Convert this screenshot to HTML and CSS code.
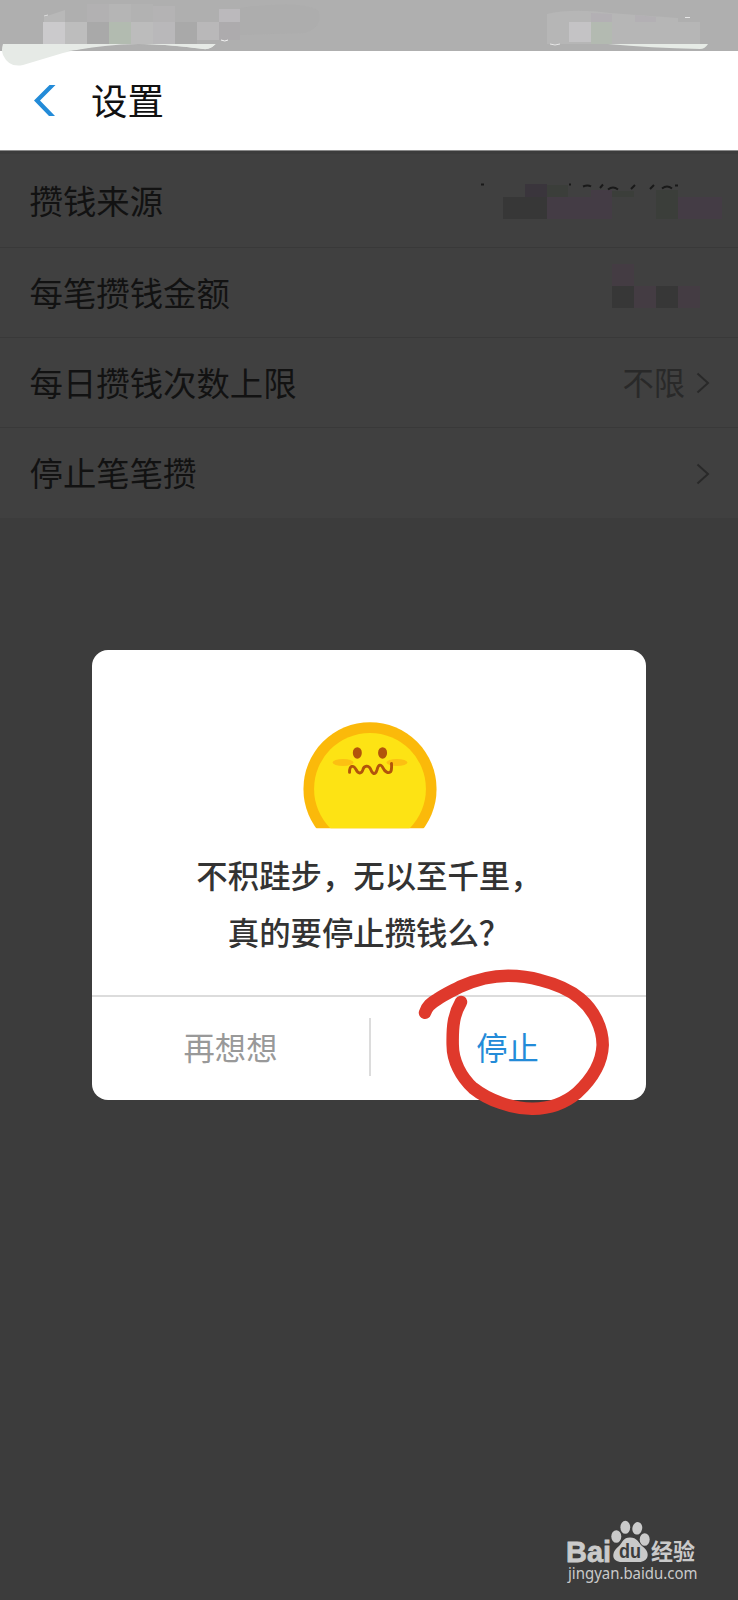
FILE: index.html
```html
<!DOCTYPE html>
<html lang="zh-CN">
<head>
<meta charset="utf-8">
<title>设置</title>
<link rel="stylesheet" href="styles.css">
</head>
<body>
<div class="screen">
  <div class="status">
    <svg class="smudge" width="738" height="70" viewBox="0 0 738 70">
      <path d="M3 44H216Q211 50 203 49Q145 41 105 46Q78 49 63 53L23 65Q9 68 3 55Q1 50 3 44Z" fill="#e6eae6"/>
      <path d="M80 50Q125 42 203 49Q211 50 216 44L214 51H68Z" fill="#afafaf"/>
      <path d="M110 44H215Q211 50 203 49Q160 43 110 44Z" fill="#e6eae6"/>
      <g shape-rendering="crispEdges">
        <path d="M43 22H65V44H43Z" fill="#cbcacc"/>
        <path d="M65 22H87V44H65Z" fill="#bdbdbd"/>
        <path d="M87 4H109V22H87Z" fill="#b2b1b2"/>
        <path d="M87 22H109V44H87Z" fill="#a9a9a9"/>
        <path d="M109 4H131V22H109Z" fill="#b5b5b5"/>
        <path d="M109 22H131V44H109Z" fill="#b2bbb0"/>
        <path d="M131 4H153V22H131Z" fill="#b2b2b2"/>
        <path d="M131 22H153V44H131Z" fill="#bcbcbc"/>
        <path d="M153 6H175V22H153Z" fill="#b4b3b4"/>
        <path d="M153 22H175V44H153Z" fill="#b9b8ba"/>
        <path d="M175 22H197V44H175Z" fill="#a9a9a9"/>
        <path d="M197 22H219V40H197Z" fill="#b9b8b9"/>
        <path d="M219 9H240V22H219Z" fill="#bbb9bc"/>
        <path d="M219 22H240V40H219Z" fill="#adabad"/>
      </g>
      <path d="M44 17L65 10V22H44Z" fill="#b8b8b8"/>
      <path d="M44 16L48 15" stroke="#ddd"/>
      <path d="M221 40Q225 42 228 40" stroke="#f3f3f3" fill="none"/>
      <path d="M240 8Q300 0 318 10Q324 27 305 33L240 35Z" fill="#adadad"/>
      <path d="M547 14Q572 8 610 13L678 18V22H700V44H547Z" fill="#b6b6b6"/>
      <path d="M569 22H591V42H569Z" fill="#c4c3c5"/>
      <path d="M591 22H612V44H591Z" fill="#b3bab1"/>
      <path d="M591 13L612 14V22H591ZM635 15L656 17V22H635Z" fill="#b3b0b4"/>
      <path d="M608 44H708Q705 49 700 49Q650 48 608 44Z" fill="#e6ebe6"/>
      <path d="M550 44Q555 46 560 44M685 17.500H690" stroke="#e6e6e6" fill="none"/>
    </svg>
  </div>
  <header class="header">
    <svg class="back" width="22" height="33" viewBox="0 0 22 33"><path d="M21.500 1H15.500L0 16.500L15 32H21L6 16.500Z" fill="#238bd8"/></svg>
    <h1 class="title">设置</h1>
  </header>
  <main class="list">
    <div class="row row-first"><span class="label">攒钱来源</span>
      <svg class="mask" width="260" height="44" viewBox="0 0 260 44">
        <path d="M55 18H99V40H55Z" fill="#373737"/>
        <path d="M77 5H99V18H77Z" fill="#3a353c"/>
        <path d="M99 6H120V18H99ZM164 12H186V18H164ZM208 11H230V40H208Z" fill="#3b3e3a"/>
        <path d="M99 18H164V40H99ZM143 11H164V18H143ZM230 18H274V40H230Z" fill="#443c45"/>
        <path d="M33 5.500h3M121 5.500h2M135 7.500q5-2 8 0M152 9l3-3.500M160 10.500q5-4 10 0M183 10l4-4M202 10l4-4M214 9.500q5-4 10 0M227 6.500h3" stroke="#191919" stroke-width="2" fill="none"/>
      </svg>
    </div>
    <div class="row"><span class="label">每笔攒钱金额</span>
      <svg class="mask mask-amount" width="88" height="44" viewBox="0 0 88 44">
        <path d="M0 0H22V22H0ZM22 22H44V44H22ZM66 22H88V44H66Z" fill="#443c43"/>
        <path d="M0 22H22V44H0ZM44 22H66V44H44Z" fill="#373737"/>
      </svg>
    </div>
    <div class="row"><span class="label">每日攒钱次数上限</span>
      <span class="value"><span class="label">不限</span><svg width="14" height="22" viewBox="0 0 14 22"><path d="M1.500 1.500L12 11L1.500 20.500" fill="none" stroke="#292929" stroke-width="2"/></svg></span>
    </div>
    <div class="row row-last"><span class="label">停止笔笔攒</span>
      <span class="value"><svg width="14" height="22" viewBox="0 0 14 22"><path d="M1.500 1.500L12 11L1.500 20.500" fill="none" stroke="#292929" stroke-width="2"/></svg></span>
    </div>
  </main>

  <section class="dialog">
    <svg class="coin" width="134" height="107" viewBox="0 0 134 107">
      <clipPath id="cut"><path d="M0 0H134V106.500H0Z"/></clipPath>
      <g clip-path="url(#cut)">
        <circle cx="67" cy="67" r="66.700" fill="#fbb90a"/>
        <circle cx="67" cy="67" r="56" fill="#fde314"/>
      </g>
      <ellipse cx="40" cy="40.500" rx="10.500" ry="3.500" fill="#fcc012"/>
      <ellipse cx="94" cy="40.500" rx="10.500" ry="3.500" fill="#fcc012"/>
      <ellipse cx="54.300" cy="31" rx="4.500" ry="5.800" fill="#b2540b"/>
      <ellipse cx="79.600" cy="31" rx="4.500" ry="5.800" fill="#b2540b"/>
      <path d="M46.500 50.500C46.500 43 50.500 43 53 47.500C55 52 58.500 52.500 60 47.500C61 43.500 65.500 43 67.500 47C69.500 52 72 54 74 48C75.500 42 78 42 80 46C82 50.500 85.500 51.500 87.500 50C89 48.500 88.700 45 88.500 41.500" fill="none" stroke="#b2540b" stroke-width="2.900" stroke-linecap="round"/>
    </svg>
    <p class="message">不积跬步，无以至千里，<br>真的要停止攒钱么？</p>
    <div class="actions">
      <button class="action action-wait">再想想</button>
      <i class="split"></i>
      <button class="action action-stop">停止</button>
    </div>
  </section>

  <svg class="mark" width="200" height="160" viewBox="415 965 200 160">
    <path d="M425 1012.700C427 1006 431 1003 437 999.500C445 994 452 991 460 986.700C475 980 490 975.700 508 975.700C520 975.700 530 977 540 980C556 984 570 990 580 998.500C594 1010 602.700 1028 602.700 1045C602 1064 590 1081 577 1093C565 1103 550 1108.700 533 1108.700C512 1109 488 1100 473 1088C461 1077 452.700 1061 452.700 1045C452.300 1025 454 1014 461 1002" fill="none" stroke="#df392c" stroke-width="12.500" stroke-linecap="round" stroke-linejoin="round"/>
  </svg>

  <svg class="brand" width="150" height="70" viewBox="0 0 150 70">
    <g fill="#cacaca">
      <text class="bai" x="6" y="41.500" textLength="45" lengthAdjust="spacingAndGlyphs">Bai</text>
      <ellipse cx="56.300" cy="16.500" rx="5" ry="6.300"/>
      <ellipse cx="65.300" cy="7.300" rx="4.900" ry="6.500"/>
      <ellipse cx="77.300" cy="8.300" rx="4.900" ry="6.300" transform="rotate(12 77.300 8.300)"/>
      <ellipse cx="84.700" cy="19.500" rx="5" ry="6.300"/>
      <path d="M70 17.500C77 17.500 78 22 82 26C91 32 89 42 79 42H62C51 42 51 32 59 26C63 22 63 17.500 70 17.500Z"/>
      <text class="jing" x="91" y="40" textLength="44" lengthAdjust="spacingAndGlyphs">经验</text>
      <text class="site" x="8" y="59" textLength="129.500" lengthAdjust="spacingAndGlyphs">jingyan.baidu.com</text>
    </g>
    <text class="du" x="59" y="38" textLength="22" lengthAdjust="spacingAndGlyphs">du</text>
  </svg>
</div>
</body>
</html>
```
FILE: styles.css
```css
* { box-sizing: border-box; }
body {
  margin: 0;
  background: #3c3c3c;
  font-family: "Noto Sans CJK SC", sans-serif;
}
.screen {
  position: relative;
  width: 738px;
  height: 1600px;
  overflow: hidden;
  background: #3c3c3c;
}
.status { height: 51px; background: #afafaf; position: relative; }
.smudge { position: absolute; left: 0; top: 0; z-index: 1; }
.header {
  display: flex;
  align-items: center;
  height: 100px;
  padding-left: 34px;
  background: #fff;
  border-bottom: 1px solid #8a8a8a;
}
.back { display: block; }
.title {
  margin: 0 0 0 35px;
  padding-bottom: 2px;
  font-size: 36.500px;
  line-height: 50px;
  font-weight: 400;
  color: #111;
}
.label { display: inline-block; padding-bottom: 2px; }
.list { background: #404040; border-top: 3px solid #3c3c3c; }
.row {
  display: flex;
  align-items: center;
  justify-content: space-between;
  height: 90.200px;
  padding: 0 28px 0 29.500px;
  border-bottom: 1px solid #393939;
  font-size: 33.400px;
  line-height: 48px;
  color: #121212;
}
.row-first { height: 94px; padding-right: 0; }
.row-last { border-bottom-color: #3c3c3c; }
.row-last .value { padding-top: 2px; }
.mask { display: block; overflow: visible; margin-right: 30px; }
.mask-amount { margin: 0 10px 14px 0; }
.value {
  display: flex;
  align-items: center;
  gap: 11px;
  font-size: 31.300px;
  color: #292929;
}
.dialog {
  position: absolute;
  left: 92px;
  top: 650px;
  width: 554px;
  height: 449.500px;
  display: flex;
  flex-direction: column;
  align-items: center;
  padding-top: 72px;
  border-radius: 16px;
  background: #fff;
}
.coin { display: block; margin-left: 2px; }
.message {
  margin: 17px 0 0;
  height: 149px;
  font-size: 31.400px;
  line-height: 57px;
  font-weight: 500;
  color: #333;
  text-align: center;
}
.actions {
  display: flex;
  align-items: center;
  width: 100%;
  height: 105px;
  border-top: 2px solid #dcdcdc;
}
.action {
  flex: 1;
  border: 0;
  padding: 0 0 2px;
  background: none;
  font: 400 31.300px/46px "Noto Sans CJK SC", sans-serif;
  color: #999;
}
.action-wait { padding-left: 1px; }
.action-stop { color: #238bd8; padding-right: 1px; }
.split { width: 2px; height: 58px; margin: 0 -1px 2px 1px; background: #dcdcdc; }
.mark { position: absolute; left: 415px; top: 965px; }
.brand { position: absolute; left: 560px; top: 1520px; overflow: visible; }
.bai { font: 700 30px "Liberation Sans", sans-serif; stroke: #cacaca; stroke-width: .8px; }
.du { font: 700 20px "Liberation Sans", sans-serif; fill: #3c3c3c; }
.jing { font: 700 23px "Noto Sans CJK SC", sans-serif; }
.site { font: 400 16px "Noto Sans", sans-serif; }
```
